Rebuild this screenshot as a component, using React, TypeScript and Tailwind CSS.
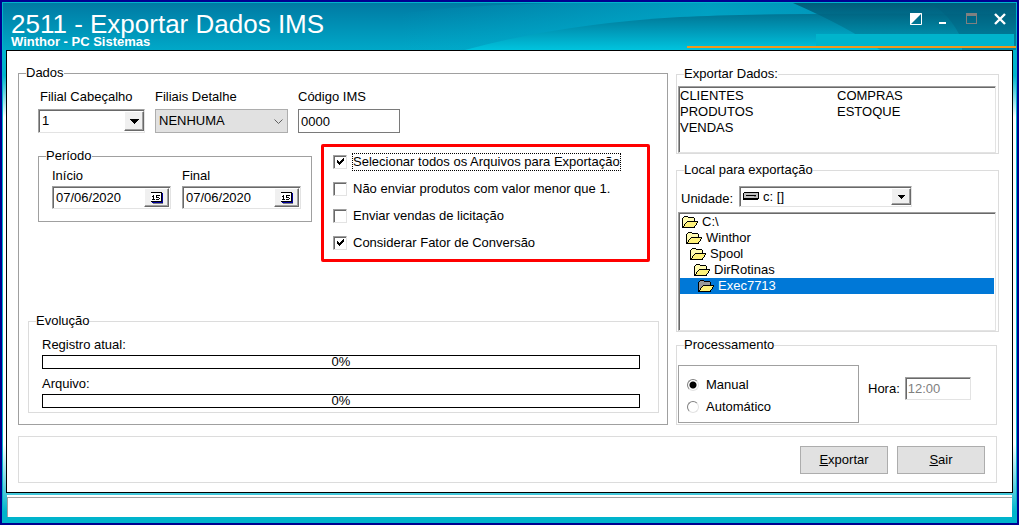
import type { ReactNode } from "react";

const sunken =
  "border border-t-[#a0a0a0] border-l-[#a0a0a0] border-b-[#e3e3e3] border-r-[#e3e3e3] bg-white shadow-[inset_1px_1px_0_#696969]";
const raised =
  "border border-white border-b-[#696969] border-r-[#696969] bg-[#f0f0f0] shadow-[inset_-1px_-1px_0_#a0a0a0]";

function Group({ title, className, children }: { title: string; className: string; children: ReactNode }) {
  return (
    <fieldset className={`min-w-0 border ${className}`}>
      <legend className="ml-[7px] leading-4">{title}</legend>
      {children}
    </fieldset>
  );
}

function ArrowButton({ small }: { small?: boolean }) {
  return (
    <span className={`pointer-events-none absolute inset-y-[2px] right-[1px] flex w-5 items-center justify-center ${raised}`}>
      <svg width={small ? 7 : 9} height={small ? 4 : 5} viewBox="0 0 9 5" shapeRendering="crispEdges">
        <path d="M0 0h9v1h-1v1h-1v1h-1v1h-1v1h-1v-1h-1v-1h-1v-1h-1v-1h-1z" fill="#000" />
      </svg>
    </span>
  );
}

function DateField({ id, label }: { id: string; label: string }) {
  return (
    <div className="w-[119px]">
      <label htmlFor={id} className="block leading-4">
        {label}
      </label>
      <div className={`mt-[2px] flex h-[23px] p-[1px] ${sunken}`}>
        <input id={id} defaultValue="07/06/2020" className="w-full min-w-0 pl-[2px] outline-none" />
        <button type="button" aria-label={`Calendário ${label}`} className={`flex w-[25px] shrink-0 items-center justify-center ${raised}`}>
          <svg width="12" height="12" viewBox="0 0 12 12" shapeRendering="crispEdges">
            <path d="M2 11h10v1h-10z" fill="#808080" />
            <path d="M11 1h1v10h-1zM1 10h10v1h-10z" fill="#0000a0" />
            <path d="M0 1h10v9h-10z" fill="#fff" />
            <path d="M0 0h11v1h-11zM0 9h10v1h-10zM10 1h1v9h-1z" fill="#000" />
            <path d="M2 3h1v5h-1zM1 4h1v1h-1zM1 7h3v1h-3zM5 3h4v1h-4zM5 4h1v1h-1zM5 5h3v1h-3zM8 6h1v1h-1zM5 7h3v1h-3z" fill="#000" />
          </svg>
        </button>
      </div>
    </div>
  );
}

const options = [
  { label: "Selecionar todos os Arquivos para Exportação", checked: true, focus: true },
  { label: "Não enviar produtos com valor menor que 1.", checked: false },
  { label: "Enviar vendas de licitação", checked: false },
  { label: "Considerar Fator de Conversão", checked: true },
];

function CheckOption({ label, checked, focus }: { label: string; checked: boolean; focus?: boolean }) {
  return (
    <label className="flex h-[27px] items-center gap-[5px]">
      <span className="relative h-[14px] w-[14px] shrink-0">
        <input type="checkbox" defaultChecked={checked} className={`peer block h-[14px] w-[14px] appearance-none ${sunken}`} />
        <svg
          className="pointer-events-none absolute top-[3px] left-[4px] hidden peer-checked:block"
          width="7"
          height="7"
          viewBox="0 0 7 7"
          shapeRendering="crispEdges"
        >
          <path d="M0 2h1v1h1v1h1v-1h1v-1h1v-1h1v-1h1v3h-1v1h-1v1h-1v1h-1v1h-1v-1h-1v-1h-1z" fill="#000" />
        </svg>
      </span>
      <span className={`border border-dotted leading-4 whitespace-nowrap ${focus ? "border-black" : "border-transparent"}`}>{label}</span>
    </label>
  );
}

function Folder({ selected }: { selected?: boolean }) {
  return (
    <svg className="shrink-0" width="16" height="12" viewBox="0 0 16 12" shapeRendering="crispEdges">
      <path d="M1 2h1v-1h4v1h6v3h-1v6h-10z" fill={selected ? "#9a9a9a" : "#fffbb0"} />
      <path d="M5 5h11l-4 6h-11z" fill="#fff27a" />
      <path
        d="M2 0h4v1h-4zM1 1h1v1h-1zM6 1h1v1h-1zM7 1h5v1h-5zM0 2h1v9h-1zM12 2h1v3h-1zM5 5h11v1h-11zM4 6h1v1h-1zM3 7h1v1h-1zM2 8h1v2h-1zM1 10h1v1h-1zM15 6h1v1h-1zM14 7h1v2h-1zM13 9h1v1h-1zM12 10h1v1h-1zM0 11h13v1h-13z"
        fill="#000"
      />
    </svg>
  );
}

const folders = [
  { name: "C:\\", indent: "pl-[2px]" },
  { name: "Winthor", indent: "pl-[6px]" },
  { name: "Spool", indent: "pl-[10px]" },
  { name: "DirRotinas", indent: "pl-[14px]" },
  { name: "Exec7713", indent: "pl-[18px]", selected: true },
];

function Progress({ label }: { label: string }) {
  return (
    <div>
      <div className="leading-4">{label}</div>
      <div role="progressbar" aria-label={label} aria-valuenow={0} className="mt-[2px] h-[14px] border border-black text-center leading-3">
        0%
      </div>
    </div>
  );
}

function TitleBar() {
  return (
    <header className="relative h-[47px] shrink-0 text-white">
      <svg className="absolute inset-0 h-full w-full" viewBox="3 3 1013 47" preserveAspectRatio="none">
        <defs>
          <linearGradient id="sky" x1="0" y1="0" x2="0" y2="1">
            <stop offset="0" stopColor="#007aa3" />
            <stop offset="1" stopColor="#00a8c8" />
          </linearGradient>
          <linearGradient id="wave" x1="0" y1="0" x2="0" y2="1">
            <stop offset="0" stopColor="#007594" />
            <stop offset="0.5" stopColor="#009bba" />
            <stop offset="1" stopColor="#00c4de" />
          </linearGradient>
          <linearGradient id="glow" x1="0" y1="0" x2="1" y2="0">
            <stop offset="0" stopColor="#00b4d2" stopOpacity="0" />
            <stop offset="0.5" stopColor="#00b4d2" stopOpacity="0.6" />
            <stop offset="1" stopColor="#0098bc" stopOpacity="0.5" />
          </linearGradient>
          <linearGradient id="deep" x1="0" y1="0" x2="0" y2="1">
            <stop offset="0" stopColor="#00526f" />
            <stop offset="1" stopColor="#00a0bc" />
          </linearGradient>
        </defs>
        <path d="M3 3h1013v47h-1013z" fill="url(#sky)" />
        <path d="M400 14Q460 5 560 3H1016V50H400z" fill="url(#glow)" />
        <path d="M465 50Q560 24 680 17Q780 12 1016 14V50z" fill="url(#wave)" />
        <path d="M793 3H1016V50H880Q850 28 793 3z" fill="url(#deep)" opacity="0.85" />
        <path d="M930 3Q950 14 962 40V50H1016V3z" fill="#00607e" opacity="0.4" />
        <path d="M816 34h198v13h-198z" fill="#00b4cc" />
        <path d="M687 46h329v2h-329z" fill="#f0981c" />
      </svg>
      <div className="relative flex items-start justify-between">
        <div className="pt-[9px] pl-2">
          <h1 className="text-[26px] leading-6">2511 - Exportar Dados IMS</h1>
          <p className="text-[13px] leading-3 font-bold">Winthor - PC Sistemas</p>
        </div>
        <div className="flex items-start gap-4 pt-[10px] pr-[10px]">
          <button type="button" aria-label="Encolher">
            <svg className="block" width="12" height="12" viewBox="0 0 12 12">
              <path d="M0.500 0.500h11v11h-11z" fill="none" stroke="#fff" />
              <path d="M0 0h12L0 12z" fill="#fff" />
            </svg>
          </button>
          <button type="button" aria-label="Minimizar">
            <svg className="block" width="12" height="12" viewBox="0 0 12 12">
              <path d="M1 9h7v2H1z" fill="#fff" />
            </svg>
          </button>
          <button type="button" aria-label="Maximizar">
            <svg className="block" width="12" height="12" viewBox="0 0 12 12" shapeRendering="crispEdges">
              <path d="M0 0h11v11H0zM1 3v7h9V3z" fill="#808080" fillRule="evenodd" />
            </svg>
          </button>
          <button type="button" aria-label="Fechar">
            <svg className="block" width="12" height="12" viewBox="0 0 12 12">
              <path d="M1 1l10 10M11 1L1 11" stroke="#fff" strokeWidth="2.400" />
            </svg>
          </button>
        </div>
      </div>
    </header>
  );
}

export default function App() {
  return (
    <div className="flex min-h-screen flex-col border-2 border-[#000090] font-['Liberation_Sans',Arial,sans-serif] text-[13px] text-black">
      <div className="flex flex-1 flex-col border border-[#00b4cc] bg-[linear-gradient(#00b4cc_14%,#fff_22%,#fff_85%,#00b4cc_98%)]">
        <TitleBar />

        <main className="mr-[3px] ml-[3px] flex-1 border border-black bg-white pt-[14px] pr-[13px] pb-2 pl-[11px]">
          <div className="grid grid-cols-[minmax(0,1fr)_323px] gap-2">
            <Group title="Dados" className="border-[#a0a0a0] pb-[11px]">
              <div className="flex gap-[10px] pt-2 pl-[19px]">
                <div className="w-[107px]">
                  <label htmlFor="filial" className="block pl-[2px] leading-4">
                    Filial Cabeçalho
                  </label>
                  <div className="relative mt-1">
                    <select id="filial" className={`h-6 w-full appearance-none pl-[3px] outline-none ${sunken}`}>
                      <option>1</option>
                    </select>
                    <ArrowButton />
                  </div>
                </div>
                <div className="w-[133px]">
                  <label htmlFor="detalhe" className="block leading-4">
                    Filiais Detalhe
                  </label>
                  <div className="relative mt-1">
                    <select id="detalhe" className="h-6 w-full appearance-none border border-[#adadad] bg-[#e1e1e1] pl-[3px] outline-none">
                      <option>NENHUMA</option>
                    </select>
                    <svg className="pointer-events-none absolute top-[10px] right-[5px]" width="9" height="6" viewBox="0 0 9 6">
                      <path d="M0.500 0.500l4 4l4-4" fill="none" stroke="#606060" />
                    </svg>
                  </div>
                </div>
                <div className="w-[102px]">
                  <label htmlFor="codigo" className="block leading-4">
                    Código IMS
                  </label>
                  <input id="codigo" defaultValue="0000" className="mt-1 block h-6 w-full border border-[#7a7a7a] pl-[2px] outline-none" />
                </div>
              </div>

              <div className="mt-[11px] flex items-start gap-[9px] pl-[19px]">
                <Group title="Período" className="mt-1 w-[274px] border-[#a0a0a0] pb-3">
                  <div className="flex gap-[11px] pt-1 pl-[13px]">
                    <DateField id="inicio" label="Início" />
                    <DateField id="final" label="Final" />
                  </div>
                </Group>
                <div className="w-[329px] rounded-[2px] border-3 border-[#ff0000] pt-[1px] pb-[3px] pl-[9px]">
                  {options.map((o) => (
                    <CheckOption key={o.label} {...o} />
                  ))}
                </div>
              </div>

              <Group title="Evolução" className="mt-[51px] mr-2 ml-[9px] border-[#dcdcdc] pb-1">
                <div className="space-y-[7px] pt-2 pr-[18px] pl-[13px]">
                  <Progress label="Registro atual:" />
                  <Progress label="Arquivo:" />
                </div>
              </Group>
            </Group>

            <div className="flex flex-col pt-[1px]">
              <Group title="Exportar Dados:" className="border-[#dcdcdc]">
                <ul className={`mt-1 mr-[2px] ml-[1px] grid h-[67px] grid-flow-col grid-cols-2 grid-rows-[16px_16px_16px] p-[1px] leading-4 ${sunken}`}>
                  {["CLIENTES", "PRODUTOS", "VENDAS", "COMPRAS", "ESTOQUE"].map((t) => (
                    <li key={t}>{t}</li>
                  ))}
                </ul>
              </Group>

              <Group title="Local para exportação" className="mt-2 border-[#dcdcdc]">
                <div className="flex items-center gap-[6px] pt-2 pl-1">
                  <label htmlFor="unidade" className="pt-1 leading-4">
                    Unidade:
                  </label>
                  <div className="relative w-[173px]">
                    <select id="unidade" className={`block h-[21px] w-full appearance-none pl-[23px] outline-none ${sunken}`}>
                      <option>c: []</option>
                    </select>
                    <svg className="pointer-events-none absolute top-[6px] left-[4px]" width="16" height="8" viewBox="0 0 16 8" shapeRendering="crispEdges">
                      <path d="M1 0h15v7h-1v1h-15v-7h1z" fill="#000" />
                      <path d="M1 1h14v5h-14z" fill="#c0c0c0" />
                      <path d="M3 3h10v1h-10z" fill="#000" />
                      <path d="M11 4h2v1h-2z" fill="#808080" />
                    </svg>
                    <ArrowButton small />
                  </div>
                </div>
                <ul className={`mt-[5px] mr-[2px] ml-[1px] h-[119px] p-[1px] leading-4 ${sunken}`}>
                  {folders.map((f) => (
                    <li key={f.name} className={`flex items-center gap-1 ${f.indent} ${f.selected ? "bg-[#0078d7] text-white" : ""}`}>
                      <Folder selected={f.selected} />
                      {f.name}
                    </li>
                  ))}
                </ul>
              </Group>

              <Group title="Processamento" className="mt-[5px] mr-[2px] border-[#dcdcdc] pb-[1px]">
                <div className="flex items-start gap-[9px] pt-3 pl-[1px]">
                  <div className="flex h-[58px] w-[181px] flex-col justify-center gap-[6px] border border-[#a0a0a0] pt-[3px] pl-2">
                    {["Manual", "Automático"].map((t, i) => (
                      <label key={t} className="flex items-center gap-[7px] leading-4">
                        <input
                          type="radio"
                          name="modo"
                          defaultChecked={i === 0}
                          className="h-3 w-3 appearance-none rounded-full border border-[#e3e3e3] border-t-[#808080] border-l-[#808080] bg-white checked:bg-[radial-gradient(circle,#000_3px,#fff_4px)]"
                        />
                        {t}
                      </label>
                    ))}
                  </div>
                  <div className="flex items-center gap-[5px] pt-3">
                    <label htmlFor="hora" className="leading-4">
                      Hora:
                    </label>
                    <input id="hora" disabled defaultValue="12:00" className={`h-[23px] w-[66px] pl-[2px] text-[#808080] ${sunken}`} />
                  </div>
                </div>
              </Group>
            </div>
          </div>

          <div className="mt-[11px] mr-[2px] flex h-[47px] items-center justify-end gap-[9px] border border-[#dcdcdc] pr-[11px]">
            <button type="button" className="h-7 w-[88px] border border-[#adadad] bg-[#e1e1e1]">
              <u>E</u>xportar
            </button>
            <button type="button" className="h-7 w-[88px] border border-[#adadad] bg-[#e1e1e1]">
              <u>S</u>air
            </button>
          </div>
        </main>

        <footer className="mx-1 mt-[2px] mb-[5px] h-[22px] border-t-2 border-white bg-white">
          <div className="h-full border-t border-l border-[#a0a0a0]" />
        </footer>
      </div>
    </div>
  );
}
